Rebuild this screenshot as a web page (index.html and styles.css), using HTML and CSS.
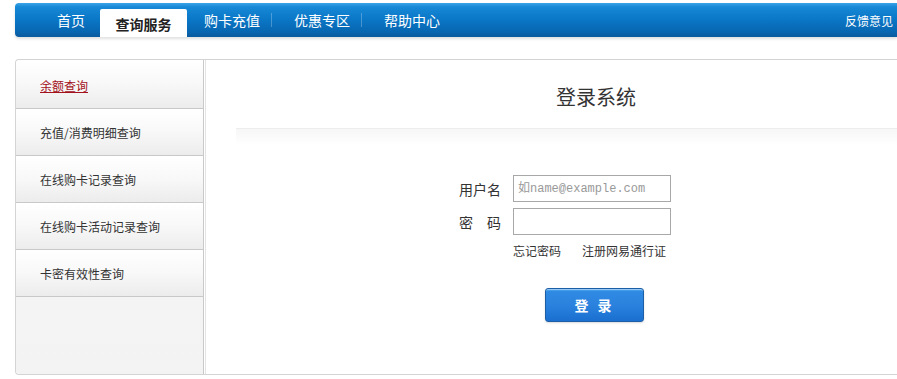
FILE: index.html
```html
<!DOCTYPE html>
<html lang="zh-CN">
<head>
    <meta charset="UTF-8">
    <meta name="viewport" content="width=device-width, initial-scale=1.0">
    <title>查询服务 - 登录系统</title>
    <link rel="stylesheet" href="styles.css">
</head>
<body>
    <div class="page">
        <div class="nav">
            <ul class="nav-menu">
                <li class="nav-item first"><a href="#">首页</a></li>
                <li class="nav-item active"><a href="#">查询服务</a></li>
                <li class="nav-item sep"><a href="#">购卡充值</a></li>
                <li class="nav-item sep"><a href="#">优惠专区</a></li>
                <li class="nav-item"><a href="#">帮助中心</a></li>
            </ul>
            <a class="nav-feedback" href="#">反馈意见</a>
        </div>

        <div class="main">
            <ul class="side-menu">
                <li class="side-item current"><a href="#">余额查询</a></li>
                <li class="side-item"><a href="#">充值/消费明细查询</a></li>
                <li class="side-item"><a href="#">在线购卡记录查询</a></li>
                <li class="side-item"><a href="#">在线购卡活动记录查询</a></li>
                <li class="side-item"><a href="#">卡密有效性查询</a></li>
            </ul>

            <div class="content">
                <h2 class="title">登录系统</h2>
                <div class="title-shade"></div>

                <form class="login-form">
                    <div class="form-row">
                        <label for="username">用户名</label>
                        <input type="text" id="username" placeholder="如name@example.com">
                    </div>
                    <div class="form-row">
                        <label for="password">密&emsp;码</label>
                        <input type="password" id="password">
                    </div>
                    <div class="form-links">
                        <a href="#">忘记密码</a>
                        <a href="#">注册网易通行证</a>
                    </div>
                    <button type="button" class="btn-login">登 录</button>
                </form>
            </div>
        </div>
    </div>
</body>
</html>
```

FILE: styles.css
```css
html, body {
    margin: 0;
    padding: 0;
    overflow: hidden;
    background-color: white;
}
body {
    font-family: "Noto Sans CJK SC", "Liberation Sans", sans-serif;
    font-size: 12px;
    color: #333;
}
ul {
    list-style: none;
    margin: 0;
    padding: 0;
}
a {
    color: #333;
    text-decoration: none;
}
.page {
    width: 882px;
    margin: 3px 0 0 15px;
}

/* top navigation */
.nav {
    display: flex;
    align-items: flex-end;
    height: 34px;
    border-radius: 4px 0 0 4px;
    background: linear-gradient(to bottom, #3aa3e6 0%, #1688d6 12%, #0a76c6 50%, #0866b0 85%, #0a5a9e 100%);
    box-shadow: 0 2px 3px rgba(0,0,0,0.12);
}
.nav-menu {
    display: flex;
    align-items: flex-end;
    height: 34px;
    padding-left: 42px;
}
.nav-item {
    display: flex;
    align-items: center;
    height: 34px;
}
.nav-item a {
    color: white;
    font-size: 14px;
    line-height: 20px;
}
.nav-item.first {
    margin-right: 15px;
}
.nav-item.active {
    justify-content: center;
    width: 87px;
    height: 28px;
    padding-top: 2px;
    box-sizing: border-box;
    background: white;
    border-radius: 2px 2px 0 0;
    margin-right: 17px;
}
.nav-item.active a {
    color: #222;
    font-weight: bold;
}
.nav-item.sep::after {
    content: "";
    display: block;
    width: 1px;
    height: 14px;
    margin: 0 22px 0 11px;
    background: rgba(255,255,255,0.25);
}
.nav-feedback {
    margin-left: auto;
    margin-right: 4px;
    align-self: center;
    color: white;
    font-size: 12px;
}

/* main panel */
.main {
    display: flex;
    height: 316px;
    margin-top: 22px;
    border: 1px solid #d4d4d4;
    border-right: none;
    border-radius: 4px 0 0 4px;
    box-sizing: border-box;
}
.side-menu {
    width: 187px;
    flex-shrink: 0;
    background: linear-gradient(to bottom, #f7f7f7, #f3f3f3);
    border-right: 1px solid #c9c9c9;
    border-radius: 4px 0 0 4px;
}
.side-item {
    height: 46px;
    display: flex;
    align-items: center;
    padding-left: 24px;
    background: linear-gradient(to bottom, #ffffff 0%, #f8f8f8 50%, #ececec 100%);
    border-bottom: 1px solid #c8c8c8;
}
.side-item:first-child {
    height: 49px;
    padding-top: 2px;
    box-sizing: border-box;
    border-radius: 4px 0 0 0;
}
.side-item a {
    font-size: 12px;
    color: #333;
}
.side-item.current a {
    color: #a3121c;
    text-decoration: underline;
}

.content {
    flex: 1;
    margin-left: 1px;
    border-left: 1px solid #e4e4e4;
    background: white;
}
.title {
    margin: 24px 0 0 350px;
    font-size: 20px;
    font-weight: normal;
    line-height: 26px;
    color: #333;
}
.title-shade {
    height: 16px;
    margin: 18px 0 0 30px;
    border-top: 1px solid #ededed;
    background: linear-gradient(to bottom, #f7f7f7, #ffffff);
}

/* login form */
.login-form {
    margin: 30px 0 0 253px;
}
.form-row {
    display: flex;
    align-items: center;
    margin-bottom: 6px;
}
.form-row label {
    width: 42px;
    margin-right: 12px;
    font-size: 14px;
    color: #333;
    white-space: nowrap;
}
.form-row input {
    width: 158px;
    height: 27px;
    padding: 0 4px;
    box-sizing: border-box;
    border: 1px solid #a8a8a8;
    font-family: "Liberation Mono", monospace;
    font-size: 12px;
    outline: none;
}
.form-row input::placeholder {
    color: #999;
}
.form-links {
    display: flex;
    gap: 21px;
    margin: 7px 0 0 54px;
    line-height: 18px;
}
.form-links a {
    font-size: 12px;
    color: #333;
}
.btn-login {
    display: block;
    width: 99px;
    height: 34px;
    margin: 28px 0 0 86px;
    border: 1px solid #1c5fa6;
    border-radius: 3px;
    background: linear-gradient(to bottom, #63b4f2 0%, #2f8ae3 8%, #2b82de 50%, #1a6fcf 100%);
    box-shadow: inset 0 1px 0 rgba(255,255,255,0.35), 0 1px 2px rgba(0,0,0,0.15);
    color: white;
    font-family: "Noto Sans CJK SC", sans-serif;
    font-size: 14px;
    font-weight: bold;
    letter-spacing: 3px;
    cursor: pointer;
}
```
